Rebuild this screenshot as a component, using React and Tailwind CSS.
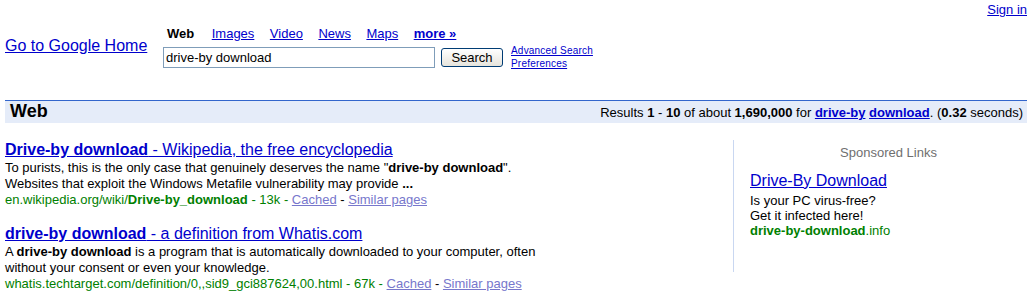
import React from "react";

const FONT = { fontFamily: "'Liberation Sans', Arial, sans-serif" };

function Result({ title, rest, lines, url }) {
  return (
    <div>
      <div className="text-[16px] leading-[20px] whitespace-nowrap">
        <a href="#" className="text-[#0000cc] underline">
          <b>{title}</b>
          {rest}
        </a>
      </div>
      <div className="text-[13px] leading-[16px] text-black whitespace-nowrap">
        {lines}
        <div>
          <span className="text-[#008000]">{url}</span>
          <a href="#" className="text-[#7777cc] underline">Cached</a>
          {" - "}
          <a href="#" className="text-[#7777cc] underline">Similar pages</a>
        </div>
      </div>
    </div>
  );
}

export default function App() {
  return (
    <div className="w-[1032px] h-[301px] overflow-hidden bg-white text-black" style={FONT}>
      {/* Sign in */}
      <div className="flex justify-end pr-[5px] pt-[2px] text-[13px] leading-[15px]">
        <a href="#" className="text-[#0000cc] underline">Sign in</a>
      </div>

      {/* Header */}
      <div className="flex items-start mt-[9px]">
        <div className="w-[163px] pl-[5px] mt-[11px] text-[16px] leading-[18px] whitespace-nowrap">
          <a href="#" className="text-[#0000cc] underline">Go to Google Home</a>
        </div>
        <div className="flex flex-col">
          <div className="flex pl-[4px] text-[13px] leading-[15px] gap-[15.5px] whitespace-nowrap">
            <b className="mr-[2px]">Web</b>
            <a href="#" className="text-[#0000cc] underline">Images</a>
            <a href="#" className="text-[#0000cc] underline">Video</a>
            <a href="#" className="text-[#0000cc] underline">News</a>
            <a href="#" className="text-[#0000cc] underline">Maps</a>
            <a href="#" className="text-[#0000cc] underline font-bold">more »</a>
          </div>
          <div className="flex items-center mt-[3px]">
            <input
              readOnly
              defaultValue="drive-by download"
              className="w-[272px] h-[21px] border border-[#7f9db9] px-[2px] text-[13px] text-black outline-none bg-white"
            />
            <button className="ml-[6px] w-[62px] h-[19px] border border-[#003c74] rounded-[3px] bg-gradient-to-b from-white to-[#e6e4dc] text-[13px] leading-[17px] text-black">
              Search
            </button>
            <div className="ml-[8px] flex flex-col text-[10px] leading-[13px] tracking-[0.2px] whitespace-nowrap">
              <a href="#" className="text-[#0000cc] underline">Advanced Search</a>
              <a href="#" className="text-[#0000cc] underline">Preferences</a>
            </div>
          </div>
        </div>
      </div>

      {/* Band */}
      <div className="mx-[5px] mt-[30px] border-t border-[#3366cc] bg-[#e5ecf9] h-[23px] flex justify-between items-baseline pl-[5px] pr-[4px] whitespace-nowrap">
        <b className="text-[18px] leading-[20px]">Web</b>
        <div className="text-[13px] leading-[15px]">
          Results <b>1</b> - <b>10</b> of about <b>1,690,000</b> for{" "}
          <a href="#" className="text-[#0000cc] underline font-bold">drive-by</a>{" "}
          <a href="#" className="text-[#0000cc] underline font-bold">download</a>. (<b>0.32</b> seconds)
        </div>
      </div>

      {/* Main */}
      <div className="flex mt-[17px] pl-[5px]">
        <div className="w-[728px]">
          <Result
            title="Drive-by download"
            rest=" - Wikipedia, the free encyclopedia"
            lines={
              <>
                <div>
                  To purists, this is the only case that genuinely deserves the name "<b>drive-by download</b>".
                </div>
                <div>
                  Websites that exploit the Windows Metafile vulnerability may provide <b>...</b>
                </div>
              </>
            }
            url={
              <>
                en.wikipedia.org/wiki/<b>Drive-by_download</b> - 13k -{" "}
              </>
            }
          />
          <div className="mt-[16px]">
            <Result
              title="drive-by download"
              rest=" - a definition from Whatis.com"
              lines={
                <>
                  <div>
                    A <b>drive-by download</b> is a program that is automatically downloaded to your computer, often
                  </div>
                  <div>without your consent or even your knowledge.</div>
                </>
              }
              url={<>whatis.techtarget.com/definition/0,,sid9_gci887624,00.html - 67k - </>}
            />
          </div>
        </div>
        <div className="w-[294px] h-[132px] border-l border-[#c9d7f1] pl-[16px] pt-[5px]">
          <div className="text-center text-[13px] leading-[15px] text-[#6f6f6f]">Sponsored Links</div>
          <div className="mt-[11px] text-[16px] leading-[20px] whitespace-nowrap">
            <a href="#" className="text-[#0000cc] underline">Drive-By Download</a>
          </div>
          <div className="mt-[2px] text-[13px] leading-[15px] whitespace-nowrap">
            <div>Is your PC virus-free?</div>
            <div>Get it infected here!</div>
            <div className="text-[#008000]">
              <b>drive-by-download</b>.info
            </div>
          </div>
        </div>
      </div>
    </div>
  );
}
